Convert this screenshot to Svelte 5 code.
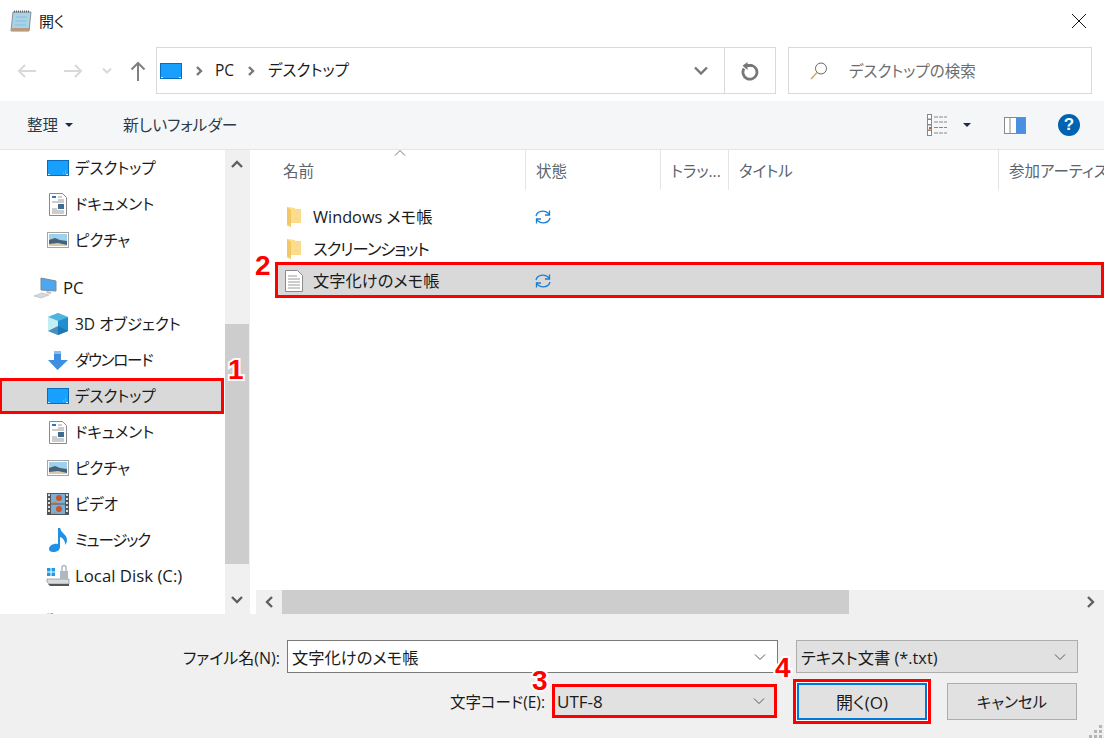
<script>
	const sideItems = [
		{ icon: 'desktop', label: 'デスクトップ' },
		{ icon: 'doc', label: 'ドキュメント' },
		{ icon: 'pic', label: 'ピクチャ' },
		{ icon: 'pc', label: 'PC', top: true, latin: true },
		{ icon: 'cube', label: '3D オブジェクト' },
		{ icon: 'down', label: 'ダウンロード', tight: true },
		{ icon: 'desktop', label: 'デスクトップ', selected: true },
		{ icon: 'doc', label: 'ドキュメント' },
		{ icon: 'pic', label: 'ピクチャ' },
		{ icon: 'video', label: 'ビデオ' },
		{ icon: 'music', label: 'ミュージック', tight: true },
		{ icon: 'disk', label: 'Local Disk (C:)', latin: true },
		{ icon: 'net', label: '', top: true }
	];

	const columns = [
		{ label: '名前', width: 270 },
		{ label: '状態', width: 135 },
		{ label: 'トラッ...', width: 68 },
		{ label: 'タイトル', width: 270 },
		{ label: '参加アーティスト', width: 106 }
	];

	const files = [
		{ name: 'Windows メモ帳', type: 'folder', synced: true },
		{ name: 'スクリーンショット', type: 'folder', synced: false, tight: true },
		{ name: '文字化けのメモ帳', type: 'file', synced: true, selected: true }
	];
</script>

{#snippet sideIcon(name)}
	<svg class="side-icon" width="24" height="24" viewBox="0 0 24 24">
		{#if name === 'desktop'}
			<rect x="1.500" y="4.500" width="21" height="15" fill="#18a0ff" stroke="#0b6cba" />
			<path d="M2 18.500h20" stroke="#dff1ff" stroke-dasharray="2 16" />
			<path d="M17 17h4M19 15h2" stroke="#7cc8ff" stroke-dasharray="1 1" />
		{:else if name === 'doc'}
			<path d="M3.500 1.500h13l4 4v18h-17z" fill="#fff" stroke="#8a8a8a" />
			<path d="M6 5h4" stroke="#2a78c8" stroke-width="2" />
			<path d="M12 5h4M12 8h6M6 10h12M6 19h12M6 21h12M6 17h5" stroke="#9a9a9a" />
			<rect x="12" y="12" width="6" height="5" fill="#3f6d8f" />
		{:else if name === 'pic'}
			<rect x="1.500" y="4.500" width="21" height="15" fill="#fff" stroke="#a5a5a5" />
			<rect x="3" y="6" width="18" height="12" fill="#9fd0ee" />
			<path d="M3 12l6-2 5 2 7 1v5H3z" fill="#45647c" />
			<path d="M3 16l9-1 9 2v1H3z" fill="#d8c9a8" />
		{:else if name === 'pc'}
			<path d="M7 2l15 3v10L7 14z" fill="#4da6f0" stroke="#7a8a99" />
			<path d="M13 15l4 1v2l-5-1z" fill="#b9c2ca" />
			<path d="M0 20l8-3 7 2-8 3z" fill="#d5dade" stroke="#b0b6bb" stroke-width=".6" />
		{:else if name === 'cube'}
			<path d="M12 1l10 4v14l-10 4L2 19V5z" fill="#8fd8ee" />
			<path d="M12 1l10 4-10 4L2 5z" fill="#4fb4dc" />
			<path d="M12 9l10-4v14l-10 4z" fill="#1f8fd0" />
			<path d="M2 5l10 4v14L2 19z" fill="#c4eef6" />
			<path d="M2 19l10-5 10 5-10 4z" fill="#1f6ea8" opacity=".75" />
		{:else if name === 'down'}
			<path d="M8 3h7v9h7L11.500 22 2 12h6z" fill="#3f8fe0" />
			<path d="M8 3h7v3H8z" fill="#8bbcec" />
		{:else if name === 'video'}
			<rect x="1" y="1" width="22" height="22" fill="#555" />
			<path d="M3 2v20M21 2v20" stroke="#ddd" stroke-width="2" stroke-dasharray="2 2" />
			<rect x="5" y="2" width="14" height="9.500" fill="#7ab0d8" />
			<rect x="5" y="12.500" width="14" height="9.500" fill="#7ab0d8" />
			<circle cx="13" cy="6" r="3" fill="#c8562a" />
			<circle cx="13" cy="17" r="3" fill="#c8562a" />
			<path d="M5 11l4-2 3 2zM5 22l4-2 3 2z" fill="#d08a50" />
		{:else if name === 'music'}
			<path d="M12 0h2.200c.5 5 6.800 6 6.800 12 0 2-.8 3.500-2 5 .5-4-2-7-5-8v10c0 3-3 5-7 5-2.500 0-4-1-4-3 0-3.500 5-6 9-5z" fill="#1e90e8" />
		{:else if name === 'disk'}
			<rect x="1" y="4" width="3.500" height="3.500" fill="#1e9be8" />
			<rect x="5.500" y="4" width="3.500" height="3.500" fill="#1e9be8" />
			<rect x="1" y="8.500" width="3.500" height="3.500" fill="#1e9be8" />
			<rect x="5.500" y="8.500" width="3.500" height="3.500" fill="#1e9be8" />
			<path d="M1 15h22v5H3l-2-2z" fill="#d8dcdf" stroke="#8a9096" stroke-width=".7" />
			<path d="M2 20h21v2H4z" fill="#555" />
			<rect x="14" y="7" width="8" height="8" fill="#aeb8c0" />
			<path d="M16 7V3.500a2 2 0 0 1 4 0V7" fill="none" stroke="#aeb8c0" stroke-width="1.500" />
		{:else if name === 'net'}
			<rect x="1" y="1" width="6" height="2" fill="#c8e4ec" />
			<rect x="5" y="1" width="2" height="2" fill="#6db4d8" />
		{/if}
	</svg>
{/snippet}

{#snippet sync()}
	<svg class="sync" width="18" height="18" viewBox="0 0 18 18" fill="none" stroke="#1a7fd4" stroke-width="1.300">
		<path d="M2 8a7 6 0 0 1 12-3l1.500 1.800" />
		<path d="M15.500 2.500v4.500h-4.500" />
		<path d="M16 10a7 6 0 0 1-12 3l-1.500-1.800" />
		<path d="M2.500 15.500v-4.500h4.500" />
	</svg>
{/snippet}

{#snippet comboArrow()}
	<svg class="combo-arrow" width="12" height="8" viewBox="0 0 12 8" fill="none" stroke="#555">
		<path d="M1 1.500l5 5 5-5" />
	</svg>
{/snippet}

<div class="dialog">
	<header class="titlebar">
		<svg width="24" height="24" viewBox="0 0 24 24">
			<path d="M4 3h18l-2 19H2z" fill="#a9d3e8" stroke="#8a8f92" />
			<path d="M2 22h18l1-3H3z" fill="#b99b7c" />
			<path d="M5 2.500h16" stroke="#666" stroke-dasharray="1 1" stroke-width="2" />
			<path d="M7 8h11M6.500 12h11M6 16h11" stroke="#88bcd8" />
		</svg>
		<span class="title">開く</span>
		<svg class="close" width="16" height="16" viewBox="0 0 16 16" stroke="#111" stroke-width="1">
			<path d="M1 1l14 14M15 1L1 15" />
		</svg>
	</header>

	<nav class="navbar">
		<div class="nav-buttons">
			<svg width="20" height="16" viewBox="0 0 20 16" fill="none" stroke="#d9d9d9" stroke-width="2"><path d="M19 8H2M8 2L2 8l6 6" /></svg>
			<svg width="20" height="16" viewBox="0 0 20 16" fill="none" stroke="#d9d9d9" stroke-width="2"><path d="M1 8h17M12 2l6 6-6 6" /></svg>
			<svg width="10" height="8" viewBox="0 0 10 8" fill="none" stroke="#d9d9d9" stroke-width="2"><path d="M1 1.500l4 4 4-4" /></svg>
			<svg width="16" height="20" viewBox="0 0 16 20" fill="none" stroke="#808080" stroke-width="2"><path d="M8 20V2M1.500 8.500L8 2l6.500 6.500" /></svg>
		</div>
		<div class="address">
			<svg width="24" height="24" viewBox="0 0 24 24">
				<rect x="1.500" y="4.500" width="21" height="15" fill="#18a0ff" stroke="#0b6cba" />
				<path d="M2 18.500h20" stroke="#dff1ff" stroke-dasharray="2 16" />
			</svg>
			<svg class="crumb-sep" width="8" height="10" viewBox="0 0 8 10" fill="none" stroke="#777" stroke-width="2.400"><path d="M2 1l4 4-4 4" /></svg>
			<span class="crumb">PC</span>
			<svg class="crumb-sep" width="8" height="10" viewBox="0 0 8 10" fill="none" stroke="#777" stroke-width="2.400"><path d="M2 1l4 4-4 4" /></svg>
			<span class="crumb">デスクトップ</span>
			<svg class="address-drop" width="14" height="9" viewBox="0 0 14 9" fill="none" stroke="#777" stroke-width="2.400"><path d="M1 1.500l6 6 6-6" /></svg>
			<div class="refresh">
				<svg width="18" height="20" viewBox="0 0 18 20" fill="none" stroke="#777" stroke-width="2.800">
					<path d="M5 4.500h6a7 7 0 1 1-8 3" />
					<path d="M1.500 4.800L6.500 1v8z" fill="#777" stroke="none" />
				</svg>
			</div>
		</div>
		<div class="search">
			<svg width="20" height="20" viewBox="0 0 20 20" fill="none">
				<circle cx="12" cy="7.500" r="5.500" stroke="#666" />
				<path d="M8 11.500L2 18" stroke="#c9a060" stroke-width="1.200" />
			</svg>
			<span>デスクトップの検索</span>
		</div>
	</nav>

	<div class="toolbar">
		<span class="tool">整理</span>
		<svg class="caret" width="8" height="4" viewBox="0 0 8 4"><path d="M0 0h8L4 4z" fill="#1f2a4d" /></svg>
		<span class="tool new-folder">新しいフォルダー</span>
		<div class="tool-right">
			<svg width="21" height="22" viewBox="0 0 21 22">
				<g fill="#fff" stroke="#888">
					<rect x=".5" y=".5" width="4" height="4.500" />
					<rect x=".5" y="5.500" width="4" height="5" />
					<rect x=".5" y="11" width="4" height="5" />
					<rect x=".5" y="16.500" width="4" height="5" />
				</g>
				<rect x="2" y="13" width="2" height="2" fill="#c8562a" />
				<path d="M7 3h13M7 8h13M7 13.500h13M7 19h13" stroke="#888" stroke-dasharray="4 1" />
			</svg>
			<svg class="caret view-caret" width="8" height="4" viewBox="0 0 8 4"><path d="M0 0h8L4 4z" fill="#1f2a4d" /></svg>
			<svg class="pane-icon" width="22" height="17" viewBox="0 0 22 17">
				<rect x=".5" y=".5" width="21" height="16" fill="#fff" stroke="#8a8a8a" />
				<rect x="12" y="1" width="9" height="15" fill="#4a90e0" />
				<path d="M6 1v15" stroke="#8a8a8a" />
			</svg>
			<div class="help">?</div>
		</div>
	</div>

	<div class="main">
		<aside class="sidebar">
			{#each sideItems as item}
				<div class="side-row" class:selected={item.selected} class:top={item.top} class:pc={item.icon === 'pc'}>
					{@render sideIcon(item.icon)}
					{#if item.label}
						<span class:latin={item.latin} class:tight={item.tight}>{item.label}</span>
					{/if}
				</div>
			{/each}
		</aside>
		<div class="vscroll">
			<button class="arrow" aria-label="up">
				<svg width="12" height="8" viewBox="0 0 12 8" fill="none" stroke="#606060" stroke-width="2.400"><path d="M1 7l5-5 5 5" /></svg>
			</button>
			<div class="vtrack"><div class="vthumb"></div></div>
			<button class="arrow" aria-label="down">
				<svg width="12" height="8" viewBox="0 0 12 8" fill="none" stroke="#606060" stroke-width="2.400"><path d="M1 1l5 5 5-5" /></svg>
			</button>
		</div>

		<section class="files">
			<div class="list">
				<div class="columns">
					<svg class="sort" width="12" height="6" viewBox="0 0 12 6" fill="none" stroke="#777"><path d="M1 5.500l5-5 5 5" /></svg>
					{#each columns as col}
						<div class="col" style="width: {col.width}px">{col.label}</div>
					{/each}
				</div>
				{#each files as file}
					<div class="file" class:selected={file.selected}>
						<div class="file-name">
							{#if file.type === 'folder'}
								<svg width="16" height="22" viewBox="0 0 16 22">
									<path d="M1 1l8 1v1h6v14H5v4l-4-1z" fill="#fbdc8c" />
									<path d="M1 1l4 3v17l-4-3z" fill="#f3c766" />
								</svg>
							{:else}
								<svg width="18" height="22" viewBox="0 0 18 22">
									<path d="M.5.500h12l5 5v16H.5z" fill="#fff" stroke="#8a8a8a" />
									<path d="M3 6h9M3 9h12M3 12h12M3 15h12M3 18h12" stroke="#9a9a9a" />
								</svg>
							{/if}
							<span class:tight-name={file.tight}>{file.name}</span>
						</div>
						{#if file.synced}
							{@render sync()}
						{/if}
					</div>
				{/each}
			</div>
			<div class="hscroll">
				<button class="arrow" aria-label="left">
					<svg width="8" height="12" viewBox="0 0 8 12" fill="none" stroke="#606060" stroke-width="2.400"><path d="M7 1L2 6l5 5" /></svg>
				</button>
				<div class="htrack"><div class="hthumb"></div></div>
				<button class="arrow" aria-label="right">
					<svg width="8" height="12" viewBox="0 0 8 12" fill="none" stroke="#606060" stroke-width="2.400"><path d="M1 1l5 5-5 5" /></svg>
				</button>
			</div>
		</section>
	</div>

	<footer class="footer">
		<div class="form-row first">
			<label class="name-label" for="filename">ファイル名(N):</label>
			<div class="input" id="filename">
				<span>文字化けのメモ帳</span>
				{@render comboArrow()}
			</div>
			<div class="combo filter">
				<span>テキスト文書 (*.txt)</span>
				{@render comboArrow()}
			</div>
		</div>
		<div class="form-row second">
			<label class="enc-label" for="encoding">文字コード(E):</label>
			<div class="combo encoding" id="encoding">
				<span>UTF-8</span>
				{@render comboArrow()}
			</div>
			<button class="btn open">開く(O)</button>
			<button class="btn cancel">キャンセル</button>
		</div>
		<svg class="grip" width="14" height="14" viewBox="0 0 14 14" fill="#b5b5b5">
			<rect x="10" y="1" width="3" height="3" />
			<rect x="5" y="6" width="3" height="3" />
			<rect x="10" y="6" width="3" height="3" />
			<rect x="0" y="11" width="3" height="3" />
			<rect x="5" y="11" width="3" height="3" />
			<rect x="10" y="11" width="3" height="3" />
		</svg>
	</footer>

	<div class="file-frame"></div>
	<span class="mark m1">1</span>
	<span class="mark m2">2</span>
	<span class="mark m3">3</span>
	<span class="mark m4">4</span>
</div>

<style>
	:global(body) {
		margin: 0;
		background: #fff;
	}

	.dialog {
		position: relative;
		width: 1104px;
		height: 738px;
		overflow: hidden;
		display: flex;
		flex-direction: column;
		font-family: "Open Sans", "Noto Sans CJK JP", sans-serif;
		font-feature-settings: "palt";
		font-size: 16px;
		color: #1a1a1a;
		background: #fff;
	}

	button {
		font: inherit;
		font-feature-settings: inherit;
		color: inherit;
		padding: 0;
	}

	.titlebar {
		height: 47px;
		display: flex;
		align-items: center;
		padding: 0 17px 6px 9px;
		box-sizing: border-box;
		flex: none;
	}

	.title {
		margin-left: 6px;
		font-size: 15px;
	}

	.close {
		margin-left: auto;
	}

	.navbar {
		height: 47px;
		flex: none;
		display: flex;
		padding-right: 12px;
	}

	.nav-buttons {
		width: 156px;
		flex: none;
		display: flex;
		align-items: center;
		padding-left: 17px;
		box-sizing: border-box;
	}

	.nav-buttons svg:nth-child(2) {
		margin-left: 26px;
	}

	.nav-buttons svg:nth-child(3) {
		margin-left: 19px;
	}

	.nav-buttons svg:nth-child(4) {
		margin-left: 18px;
	}

	.address {
		width: 620px;
		flex: none;
		box-sizing: border-box;
		border: 1px solid #d9d9d9;
		display: flex;
		align-items: center;
		padding-left: 2px;
	}

	.crumb-sep {
		margin-left: 12px;
		margin-right: 12px;
	}

	.crumb {
		font-size: 15.500px;
		margin-bottom: 2px;
	}

	.crumb + .crumb-sep {
		margin-left: 13px;
		margin-right: 13px;
	}

	.address-drop {
		margin-left: auto;
		margin-right: 16px;
	}

	.refresh {
		width: 50px;
		height: 100%;
		border-left: 1px solid #d9d9d9;
		display: flex;
		align-items: center;
		justify-content: center;
	}

	.search {
		margin-left: 12px;
		flex: 1;
		border: 1px solid #d9d9d9;
		display: flex;
		align-items: center;
		padding-left: 20px;
		color: #6d6d6d;
		font-size: 15.500px;
	}

	.search span {
		margin-left: 20px;
	}

	.toolbar {
		margin-top: 7px;
		height: 49px;
		flex: none;
		box-sizing: border-box;
		background: #f5f6f8;
		border-bottom: 1px solid #e5e5e5;
		display: flex;
		align-items: center;
		padding-left: 27px;
		padding-right: 24px;
	}

	.tool {
		color: #2b3a4a;
		font-size: 15.500px;
		margin-bottom: 2px;
	}

	.caret {
		margin-left: 7px;
	}

	.tool.new-folder {
		margin-left: 50px;
		font-size: 15.800px;
	}

	.tool-right {
		margin-left: auto;
		display: flex;
		align-items: center;
	}

	.view-caret {
		margin-left: 15px;
	}

	.pane-icon {
		margin-left: 33px;
	}

	.help {
		margin-left: 32px;
		width: 22px;
		height: 22px;
		border-radius: 50%;
		background: #0063b1;
		color: #fff;
		font-size: 17px;
		font-weight: 700;
		font-family: "Liberation Sans", sans-serif;
		line-height: 22px;
		text-align: center;
	}

	.main {
		height: 464px;
		flex: none;
		display: flex;
	}

	.sidebar {
		width: 225px;
		flex: none;
		overflow: hidden;
	}

	.side-row {
		height: 36px;
		display: flex;
		align-items: center;
		padding-left: 46px;
		box-sizing: border-box;
		font-size: 15.500px;
	}

	.side-row span {
		margin-left: 5px;
		margin-bottom: 2px;
	}

	.side-row .latin {
		font-size: 16.800px;
	}

	.side-row .tight {
		letter-spacing: -1.200px;
	}

	.side-row.top {
		margin-top: 12px;
	}

	.side-row.pc {
		padding-left: 34px;
	}

	.side-row.selected {
		background: #d9d9d9;
		border: 3px solid #f00;
		border-left-width: 2px;
		padding-left: 44px;
		margin-right: 1px;
	}

	.vscroll {
		width: 25px;
		flex: none;
		background: #f0f0f0;
		display: flex;
		flex-direction: column;
	}

	.arrow {
		flex: none;
		border: 0;
		background: transparent;
		display: flex;
		align-items: center;
		justify-content: center;
	}

	.vscroll .arrow {
		height: 28px;
		width: 24px;
	}

	.vtrack {
		flex: 1;
		padding-top: 146px;
		padding-bottom: 22px;
		box-sizing: border-box;
		width: 24px;
		display: flex;
	}

	.vthumb {
		flex: 1;
		background: #cdcdcd;
	}

	.files {
		flex: 1;
		margin-left: 6px;
		display: flex;
		flex-direction: column;
		min-width: 0;
	}

	.list {
		flex: 1;
		overflow: hidden;
	}

	.columns {
		position: relative;
		height: 40px;
		display: flex;
		margin-bottom: 11px;
	}

	.sort {
		position: absolute;
		left: 138px;
		top: 0;
	}

	.col {
		flex: none;
		box-sizing: border-box;
		padding: 9px 0 0 10px;
		border-right: 1px solid #e5e5e5;
		color: #5a6570;
		font-size: 15.500px;
		white-space: nowrap;
		overflow: hidden;
	}

	.col:first-of-type {
		padding-left: 27px;
	}

	.col:last-child {
		border-right: 0;
	}

	.file {
		height: 32px;
		margin-left: 20px;
		display: flex;
		align-items: center;
		font-size: 16.300px;
	}

	.file.selected {
		background: #d9d9d9;
	}

	.file-name {
		width: 258px;
		flex: none;
		display: flex;
		align-items: center;
		padding-left: 9px;
		box-sizing: border-box;
	}

	.file-name svg {
		width: 18px;
		flex: none;
	}

	.file-name span {
		margin-left: 10px;
		margin-bottom: 2px;
	}

	.file-name .tight-name {
		letter-spacing: -1px;
	}

	.hscroll {
		height: 24px;
		flex: none;
		background: #f0f0f0;
		display: flex;
	}

	.hscroll .arrow {
		width: 26px;
		height: 24px;
	}

	.htrack {
		flex: 1;
	}

	.hthumb {
		width: 567px;
		height: 100%;
		background: #cdcdcd;
	}

	.footer {
		position: relative;
		flex: 1;
		background: #f0f0f0;
		box-sizing: border-box;
		padding-top: 26px;
	}

	.form-row {
		display: flex;
		align-items: center;
	}

	.form-row.first {
		height: 33px;
	}

	.form-row.second {
		height: 34px;
		margin-top: 11px;
	}

	label {
		text-align: right;
		flex: none;
		font-size: 15.500px;
	}

	.name-label {
		width: 280px;
		font-size: 16px;
	}

	.enc-label {
		width: 545px;
	}

	.input,
	.combo {
		height: 100%;
		box-sizing: border-box;
		display: flex;
		align-items: center;
		justify-content: space-between;
		flex: none;
		padding: 0 11px 0 4px;
		font-size: 16.300px;
	}

	.input {
		margin-left: 7px;
		width: 491px;
		background: #fff;
		border: 1px solid #7a7a7a;
	}

	.combo {
		background: #e1e1e1;
		border: 1px solid #adadad;
	}

	.filter {
		margin-left: 18px;
		width: 282px;
	}

	.encoding {
		margin-left: 7px;
		width: 225px;
		background: #e1e1e1;
		border: 3px solid #f00;
		padding-left: 2px;
		padding-right: 9px;
		font-size: 17px;
	}

	.btn {
		flex: none;
		width: 130px;
		height: 37px;
		box-sizing: border-box;
		background: #e1e1e1;
		border: 1px solid #adadad;
		text-align: center;
		font-size: 15.500px;
	}

	.open {
		margin-left: 20px;
		border: 2px solid #0078d7;
		box-shadow: 0 0 0 1px #fff;
		outline: 3px solid #f00;
		outline-offset: 1px;
		font-size: 17px;
	}

	.cancel {
		margin-left: 20px;
	}

	.grip {
		position: absolute;
		right: 1px;
		bottom: 0;
	}

	.file-frame {
		position: absolute;
		left: 275px;
		top: 262px;
		width: 829px;
		height: 36px;
		box-sizing: border-box;
		border: 3px solid #f00;
	}

	.mark {
		position: absolute;
		color: #f00;
		font-family: "Liberation Sans", sans-serif;
		font-weight: 700;
		font-size: 28px;
		line-height: 28px;
		-webkit-text-stroke: 4px #fff;
		paint-order: stroke fill;
	}

	.m1 { left: 228px; top: 356px; }
	.m2 { left: 255px; top: 252px; }
	.m3 { left: 532px; top: 667px; }
	.m4 { left: 775px; top: 654px; }
</style>
